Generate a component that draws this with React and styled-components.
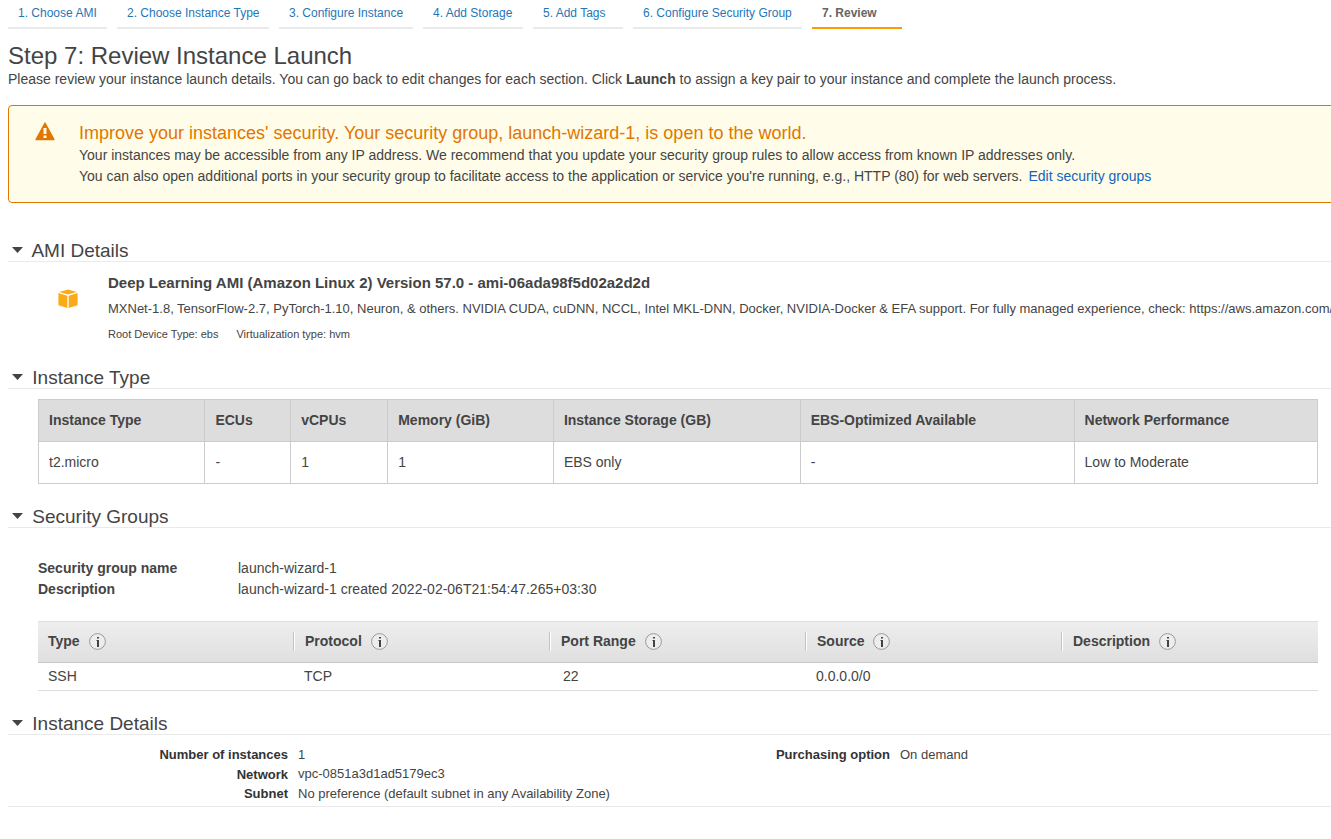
import React from "react";
import styled, { createGlobalStyle } from "styled-components";

const GlobalStyle = createGlobalStyle`
  * { box-sizing: border-box; }
  html, body { margin: 0; padding: 0; background: #fff; overflow: hidden; }
  body {
    font-family: "Liberation Sans", Arial, Helvetica, sans-serif;
    font-size: 14px;
    line-height: 21px;
    color: #444;
  }
`;

const Page = styled.main`
  height: 839px;
  padding-left: 8px;
  overflow: hidden;
`;

const Tabs = styled.nav`
  display: flex;
  gap: 10px;
  height: 29px;
`;

const Tab = styled.a`
  width: ${(p) => p.$width}px;
  height: 29px;
  padding: 3px 0 0 10px;
  font-size: 12px;
  line-height: 21px;
  white-space: nowrap;
  font-weight: ${(p) => (p.$active ? "bold" : "normal")};
  color: ${(p) => (p.$active ? "#666" : "#1f76b9")};
  border-bottom: 2px solid ${(p) => (p.$active ? "#ff9900" : "#eaeaea")};
`;

const Title = styled.h1`
  margin: 15px 0 1px;
  font-size: 24px;
  line-height: 24px;
  font-weight: normal;
`;

const Intro = styled.p`
  margin: 0;
  white-space: nowrap;
`;

const Alert = styled.section`
  display: flex;
  width: 1340px;
  height: 98px;
  margin-top: 15px;
  padding: 16px 0 0 26px;
  border: 1px solid #e07700;
  border-radius: 4px;
  background: #fffce9;
  white-space: nowrap;

  svg { flex: none; margin-right: 24px; }
`;

const AlertTitle = styled.h2`
  margin: 0 0 1px;
  font-size: 18px;
  line-height: 22px;
  font-weight: normal;
  color: #e07700;
`;

const Link = styled.a`
  margin-left: 2px;
  color: #1166bb;
`;

const Section = styled.section`
  margin-top: ${(p) => p.$gap}px;
`;

const SectionHeading = styled.h2`
  display: flex;
  height: 23px;
  margin: 0;
  padding-left: 4px;
  font-size: 19px;
  line-height: 24px;
  font-weight: normal;
  border-bottom: 1px solid #eaeaea;

  svg { margin: 8px ${(p) => p.$space}px 0 0; }
`;

const Ami = styled.div`
  display: flex;
  height: 94px;
  padding: 10px 0 0 50px;
  white-space: nowrap;

  svg { flex: none; margin: 17px 30px 0 0; }
`;

const AmiName = styled.h3`
  margin: 0 0 6px;
  font-size: 15px;
  line-height: 21px;
`;

const AmiText = styled.p`
  margin: 0 0 6px;
  font-size: 13px;
  line-height: 20px;
`;

const AmiMeta = styled.div`
  display: flex;
  gap: 18px;
  font-size: 11px;
  line-height: 19px;
`;

const TypeTable = styled.div`
  width: 1280px;
  margin: 10px 0 0 30px;
  border: solid #ccc;
  border-width: 1px 0 0 1px;
`;

const TypeRow = styled.div`
  display: grid;
  grid-template-columns: 166.4px 85.8px 97px 165.7px 246.8px 273.9px 1fr;
  height: 42px;
  line-height: 41px;
  font-weight: ${(p) => (p.$head ? "bold" : "normal")};
  background: ${(p) => (p.$head ? "#ddd" : "#fff")};
`;

const TypeCell = styled.div`
  padding-left: 10px;
  border: solid #ccc;
  border-width: 0 1px 1px 0;
`;

const GroupInfo = styled.dl`
  display: grid;
  grid-template-columns: 200px 1fr;
  margin: 30px 0 0 30px;

  dt { font-weight: bold; }
  dd { margin: 0; }
`;

const RuleTable = styled.div`
  width: 1280px;
  margin: 21px 0 0 30px;
`;

const RuleHead = styled.div`
  display: grid;
  grid-template-columns: repeat(5, 256px);
  align-items: start;
  height: 42px;
  padding-top: 10px;
  border-top: 1px solid #ddd;
  border-bottom: 1px solid #c8c8c8;
  background: linear-gradient(#eee, #dfdfdf);
`;

const RuleHeading = styled.div`
  display: flex;
  align-items: center;
  gap: 9px;
  height: 19px;
  padding-left: ${(p) => (p.$first ? 10 : 11)}px;
  font-weight: bold;
  ${(p) =>
    !p.$first &&
    `margin-left: -1px;
     border-left: 1px solid #c3c3c3;
     box-shadow: inset 1px 0 #fff;`}
`;

const RuleRow = styled.div`
  display: grid;
  grid-template-columns: repeat(5, 256px);
  height: 28px;
  line-height: 27px;
  border-bottom: 1px solid #ddd;
`;

const RuleCell = styled.div`
  padding-left: ${(p) => p.$indent}px;
`;

const Details = styled.div`
  display: flex;
  height: 72px;
  padding-top: 10px;
  border-bottom: 1px solid #eaeaea;
`;

const DetailList = styled.dl`
  display: grid;
  grid-template-columns: 280px 1fr;
  grid-auto-rows: 19.5px;
  column-gap: 10px;
  width: 602px;
  margin: 0;
  font-size: 13px;
  line-height: 20px;
  white-space: nowrap;

  dt { text-align: right; font-weight: bold; color: #333; }
  dd { margin: 0; }
  dd:nth-of-type(2) { line-height: 18.9px; }
`;

const WarningIcon = () => (
  <svg width="20" height="19" viewBox="0 0 20 19">
    <path d="M10 1 L19 17.5 H1 Z" fill="#e07700" stroke="#e07700" strokeWidth="1.3" strokeLinejoin="round" />
    <path d="M8.5 6h3v6h-3zM8.5 13.5h3V16h-3z" fill="#fffce9" />
  </svg>
);

const Caret = () => (
  <svg width="11" height="6" viewBox="0 0 11 6">
    <path d="M0 0h11L5.5 6z" fill="#444" />
  </svg>
);

const BoxIcon = () => (
  <svg width="20" height="20" viewBox="0 0 20 20" fill="#fbab18">
    <path d="M10 .6 18.8 3 10 5.6 1.2 3z" />
    <path d="M.4 4 9.3 6.7V19L.4 16.2zM19.6 4l-8.9 2.7V19l8.9-2.8z" />
  </svg>
);

const InfoIcon = () => (
  <svg width="17" height="17" viewBox="0 0 17 17">
    <circle cx="8.5" cy="8.5" r="7.9" fill="#ededed" stroke="#999" />
    <path d="M8 4h2v1.6H8zM7.5 7H10v7H8V8h-.5z" fill="#444" />
  </svg>
);

const steps = [
  ["1. Choose AMI", 99],
  ["2. Choose Instance Type", 152],
  ["3. Configure Instance", 134],
  ["4. Add Storage", 100],
  ["5. Add Tags", 90],
  ["6. Configure Security Group", 169],
  ["7. Review", 90],
];

const typeHeadings = [
  "Instance Type",
  "ECUs",
  "vCPUs",
  "Memory (GiB)",
  "Instance Storage (GB)",
  "EBS-Optimized Available",
  "Network Performance",
];
const typeValues = ["t2.micro", "-", "1", "1", "EBS only", "-", "Low to Moderate"];

const ruleHeadings = ["Type", "Protocol", "Port Range", "Source", "Description"];
const ruleValues = [
  ["SSH", 10],
  ["TCP", 10],
  ["22", 13],
  ["0.0.0.0/0", 10],
  ["", 10],
];

const Heading = ({ space = 9.3, children }) => (
  <SectionHeading $space={space}>
    <Caret />
    {children}
  </SectionHeading>
);

export default function App() {
  return (
    <>
      <GlobalStyle />
      <Page>
        <Tabs>
          {steps.map(([label, width], i) => (
            <Tab key={label} $width={width} $active={i === 6}>
              {label}
            </Tab>
          ))}
        </Tabs>
        <Title>Step 7: Review Instance Launch</Title>
        <Intro>
          Please review your instance launch details. You can go back to edit changes for each section. Click{" "}
          <b>Launch</b> to assign a key pair to your instance and complete the launch process.
        </Intro>

        <Alert>
          <WarningIcon />
          <div>
            <AlertTitle>
              Improve your instances' security. Your security group, launch-wizard-1, is open to the world.
            </AlertTitle>
            <div>
              Your instances may be accessible from any IP address. We recommend that you update your security group
              rules to allow access from known IP addresses only.
            </div>
            <div>
              You can also open additional ports in your security group to facilitate access to the application or
              service you're running, e.g., HTTP (80) for web servers. <Link>Edit security groups</Link>
            </div>
          </div>
        </Alert>

        <Section $gap={36}>
          <Heading space={8.4}>AMI Details</Heading>
          <Ami>
            <BoxIcon />
            <div>
              <AmiName>Deep Learning AMI (Amazon Linux 2) Version 57.0 - ami-06ada98f5d02a2d2d</AmiName>
              <AmiText>
                MXNet-1.8, TensorFlow-2.7, PyTorch-1.10, Neuron, &amp; others. NVIDIA CUDA, cuDNN, NCCL, Intel MKL-DNN,
                Docker, NVIDIA-Docker &amp; EFA support. For fully managed experience, check: https://aws.amazon.com/
              </AmiText>
              <AmiMeta>
                <span>Root Device Type: ebs</span>
                <span>Virtualization type: hvm</span>
              </AmiMeta>
            </div>
          </Ami>
        </Section>

        <Section $gap={10}>
          <Heading>Instance Type</Heading>
          <TypeTable>
            <TypeRow $head>
              {typeHeadings.map((t) => (
                <TypeCell key={t}>{t}</TypeCell>
              ))}
            </TypeRow>
            <TypeRow>
              {typeValues.map((t, i) => (
                <TypeCell key={i}>{t}</TypeCell>
              ))}
            </TypeRow>
          </TypeTable>
        </Section>

        <Section $gap={21}>
          <Heading>Security Groups</Heading>
          <GroupInfo>
            <dt>Security group name</dt>
            <dd>launch-wizard-1</dd>
            <dt>Description</dt>
            <dd>launch-wizard-1 created 2022-02-06T21:54:47.265+03:30</dd>
          </GroupInfo>
          <RuleTable>
            <RuleHead>
              {ruleHeadings.map((t, i) => (
                <RuleHeading key={t} $first={i === 0}>
                  {t}
                  <InfoIcon />
                </RuleHeading>
              ))}
            </RuleHead>
            <RuleRow>
              {ruleValues.map(([t, indent], i) => (
                <RuleCell key={i} $indent={indent}>
                  {t}
                </RuleCell>
              ))}
            </RuleRow>
          </RuleTable>
        </Section>

        <Section $gap={21}>
          <Heading>Instance Details</Heading>
          <Details>
            <DetailList>
              <dt>Number of instances</dt>
              <dd>1</dd>
              <dt>Network</dt>
              <dd>vpc-0851a3d1ad5179ec3</dd>
              <dt>Subnet</dt>
              <dd>No preference (default subnet in any Availability Zone)</dd>
            </DetailList>
            <DetailList>
              <dt>Purchasing option</dt>
              <dd>On demand</dd>
            </DetailList>
          </Details>
        </Section>
      </Page>
    </>
  );
}
